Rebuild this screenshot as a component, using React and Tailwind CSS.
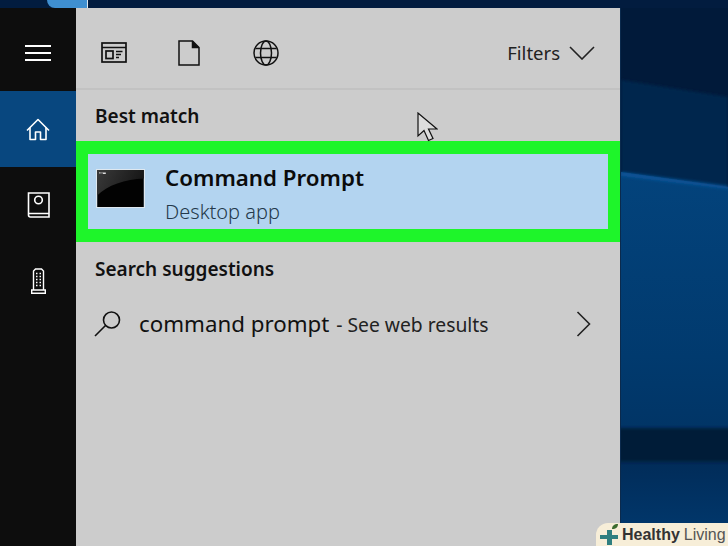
const FONT = 'font-["Noto_Sans",sans-serif]';

function NewsIcon() {
  return (
    <svg width="26" height="21" viewBox="0 0 26 21" fill="none" stroke="#111" strokeWidth="1.700" className="block">
      <rect x="1" y="1" width="24" height="19" />
      <path d="M1 5.500h24" strokeWidth="1.500" />
      <rect x="5" y="9" width="7" height="7.500" />
      <path d="M15 9.500h6.500M15 12.500h5M15 15.500h3" strokeWidth="1.400" />
    </svg>
  );
}

function DocIcon() {
  return (
    <svg width="22" height="26" viewBox="0 0 22 26" fill="none" stroke="#111" strokeWidth="1.500" className="block">
      <path d="M1 1h13.500L21 7.500V25H1z" />
      <path d="M14.500 1v6.500H21" fill="#111" />
    </svg>
  );
}

function GlobeIcon() {
  return (
    <svg width="26" height="26" viewBox="0 0 26 26" fill="none" stroke="#111" strokeWidth="1.500" className="block">
      <circle cx="13" cy="13" r="12" />
      <ellipse cx="13" cy="13" rx="5.500" ry="12" />
      <path d="M2.500 8.500h21M2.500 17.500h21" />
    </svg>
  );
}

function HomeIcon() {
  return (
    <svg width="24" height="23" viewBox="0 0 24 23" fill="none" stroke="#fff" strokeWidth="1.600" strokeLinejoin="round" className="block">
      <path d="M1 12.500L12 1.500l11 11" />
      <path d="M4 9.500V21.500h5.500V14h5v7.500H20V9.500" />
    </svg>
  );
}

function BookIcon() {
  return (
    <svg width="23" height="26" viewBox="0 0 23 26" fill="none" stroke="#fff" strokeWidth="1.600" className="block">
      <path d="M1.500 21.500V1h20.500v24H3.500a2 2 0 0 1-2-2v-1.500H22" />
      <circle cx="11.500" cy="8" r="3.800" />
    </svg>
  );
}

function TowerIcon() {
  return (
    <svg width="15" height="26" viewBox="0 0 15 26" fill="none" stroke="#fff" strokeWidth="1.400" className="block">
      <path d="M2.500 22V3L4.500 1h6l2 2v19" />
      <path d="M.7 25.300h13.600V22H.7z" />
      <path d="M5 5.500h1.500M8.500 5.500H10M5 8.500h1.500M8.500 8.500H10M5 11.500h1.500M8.500 11.500H10M5 14.500h1.500M8.500 14.500H10M5 17.500h1.500M8.500 17.500H10" strokeWidth="1.300" />
    </svg>
  );
}

function CmdIcon() {
  return (
    <svg width="49" height="39" viewBox="0 0 49 39" className="mb-[6px] block shrink-0 border border-[#dfe8ef]">
      <defs>
        <linearGradient id="gloss" x1="0" y1="0" x2="1" y2="0.300">
          <stop offset="0" stopColor="#3a3a3a" />
          <stop offset="1" stopColor="#161616" />
        </linearGradient>
      </defs>
      <rect width="49" height="39" fill="#020202" />
      <path d="M0 0h49v9C30 10 10 16 0 27z" fill="url(#gloss)" />
      <path d="M2 3h1.500M4.500 3h1M6 3.500h3" stroke="#ddd" strokeWidth="1.500" />
    </svg>
  );
}

function MouseCursor() {
  return (
    <svg width="21" height="30" viewBox="0 0 21 30" className="absolute left-[417px] top-[112px]">
      <path d="M1 1v23l6-5.500 4.500 10 4.500-2-4.500-9.500h8.500z" fill="#ddd" stroke="#111" strokeWidth="1.200" />
    </svg>
  );
}

function Wallpaper() {
  return (
    <svg width="107" height="538" viewBox="0 8 107 538" className="block shrink-0">
      <defs>
        <linearGradient id="wall" x1="0" y1="0" x2="0" y2="1">
          <stop offset="0" stopColor="#03437c" />
          <stop offset="0.500" stopColor="#013a6e" />
          <stop offset="1" stopColor="#012d5a" />
        </linearGradient>
        <linearGradient id="low" x1="0" y1="0" x2="0" y2="1">
          <stop offset="0" stopColor="#012c59" />
          <stop offset="1" stopColor="#013a70" />
        </linearGradient>
        <filter id="soft"><feGaussianBlur stdDeviation="1.500" /></filter>
      </defs>
      <rect y="8" width="107" height="538" fill="#011a3a" />
      <path d="M0 80L107 97V190H0z" fill="#02264e" filter="url(#soft)" />
      <path d="M0 172L107 187V540H0z" fill="url(#wall)" />
      <rect y="462" width="107" height="84" fill="url(#low)" />
      <rect x="-6" y="428" width="119" height="34" fill="#021b39" filter="url(#soft)" />
      <path d="M0 172L107 186V189L0 176z" fill="#0a5499" filter="url(#soft)" />
    </svg>
  );
}

function Watermark() {
  return (
    <div className="absolute right-0 bottom-0 flex h-[23px] w-[132px] items-center rounded-tl-[12px] bg-[#f7eed8] pl-[3px] font-['Liberation_Sans',sans-serif]">
      <svg width="22" height="23" viewBox="0 0 22 23" className="shrink-0">
        <path d="M8 7h5v5h6v4h-6v6H8v-6H1v-4h7z" fill="#2f7f80" />
        <path d="M13 6c0-3 2-5 6-5 0 3-2 5-6 5z" fill="#3b6b2e" />
      </svg>
      <span className="ml-[1px] text-[16px] leading-none font-bold text-[#333]">Healthy</span>
      <span className="ml-[4px] text-[16px] leading-none text-[#555]">Living</span>
    </div>
  );
}

export default function App() {
  return (
    <div className={`relative flex h-[546px] w-[728px] flex-col overflow-hidden bg-[#01142f] ${FONT}`}>
      {/* top strip of the desktop */}
      <div className="flex h-2 shrink-0 bg-[#021c3f]">
        <div className="ml-[47px] h-2 w-10 rounded-bl-lg bg-[#3f8fd0]" />
        <div className="h-2 w-px bg-[#dfe8ef]" />
      </div>

      <div className="flex min-h-0 flex-1">
        {/* left rail */}
        <div className="flex w-[76px] shrink-0 flex-col bg-[#0d0d0d]">
          <div className="flex h-[83px] items-center justify-center pt-[7px]">
            <div className="flex w-[26px] flex-col gap-[5px]">
              <div className="h-[2px] bg-white" />
              <div className="h-[2px] bg-white" />
              <div className="h-[2px] bg-white" />
            </div>
          </div>
          <div className="flex h-[76px] items-center justify-center bg-[#08477f]">
            <HomeIcon />
          </div>
          <div className="flex h-[76px] items-center justify-center">
            <BookIcon />
          </div>
          <div className="flex h-[76px] items-center justify-center">
            <TowerIcon />
          </div>
        </div>

        {/* search panel */}
        <div className="relative flex w-[544px] shrink-0 flex-col bg-[#cccccc]">
          <div className="flex h-[82px] shrink-0 items-center border-b-2 border-[#c2c2c2] pt-[9px] pr-[25px] pl-[25px]">
            <NewsIcon />
            <div className="ml-[51px]"><DocIcon /></div>
            <div className="ml-[53px]"><GlobeIcon /></div>
            <span className="ml-auto text-[18.500px] text-[#222]">Filters</span>
            <svg width="26" height="14" viewBox="0 0 26 14" fill="none" stroke="#222" strokeWidth="1.600" className="ml-[9px]">
              <path d="M1 1l12 12L25 1" />
            </svg>
          </div>

          <div className="flex h-[51px] shrink-0 items-center pt-[2px] pl-[19px] text-[19px] font-semibold text-[#111]">Best match</div>

          <div className="h-[101px] shrink-0 border-x-[12px] border-y-[13px] border-[#1ef52a] bg-[#b3d4f0]">
            <div className="flex h-full items-center pl-[8px]">
              <CmdIcon />
              <div className="mt-[3px] ml-[20px] flex flex-col">
                <span className="text-[22.300px] leading-[31px] font-semibold text-[#0b0b0b]">Command Prompt</span>
                <span className="mt-[6px] text-[20px] leading-[26px] font-light text-[#24394a]">Desktop app</span>
              </div>
            </div>
          </div>

          <div className="flex h-[54px] shrink-0 items-center pl-[19px] text-[19px] font-semibold text-[#111]">Search suggestions</div>

          <div className="mt-[11px] flex items-center pr-[29px] pl-[17px]">
            <svg width="30" height="28" viewBox="0 0 30 28" fill="none" stroke="#111" strokeWidth="1.600">
              <circle cx="18.500" cy="10" r="8" />
              <path d="M12.500 15.500L2 26" />
            </svg>
            <div className="ml-[16px] flex items-baseline">
              <span className="text-[22.300px] leading-[33px] text-[#111]">command prompt</span>
              <span className="ml-[7px] text-[19.300px] text-[#222]">- See web results</span>
            </div>
            <svg width="15" height="26" viewBox="0 0 15 26" fill="none" stroke="#222" strokeWidth="1.600" className="ml-auto">
              <path d="M1.500 1l12 12-12 12" />
            </svg>
          </div>
        </div>

        <div className="w-px shrink-0 bg-[#0b2a4d]" />
        <Wallpaper />
      </div>

      <MouseCursor />
      <Watermark />
    </div>
  );
}
